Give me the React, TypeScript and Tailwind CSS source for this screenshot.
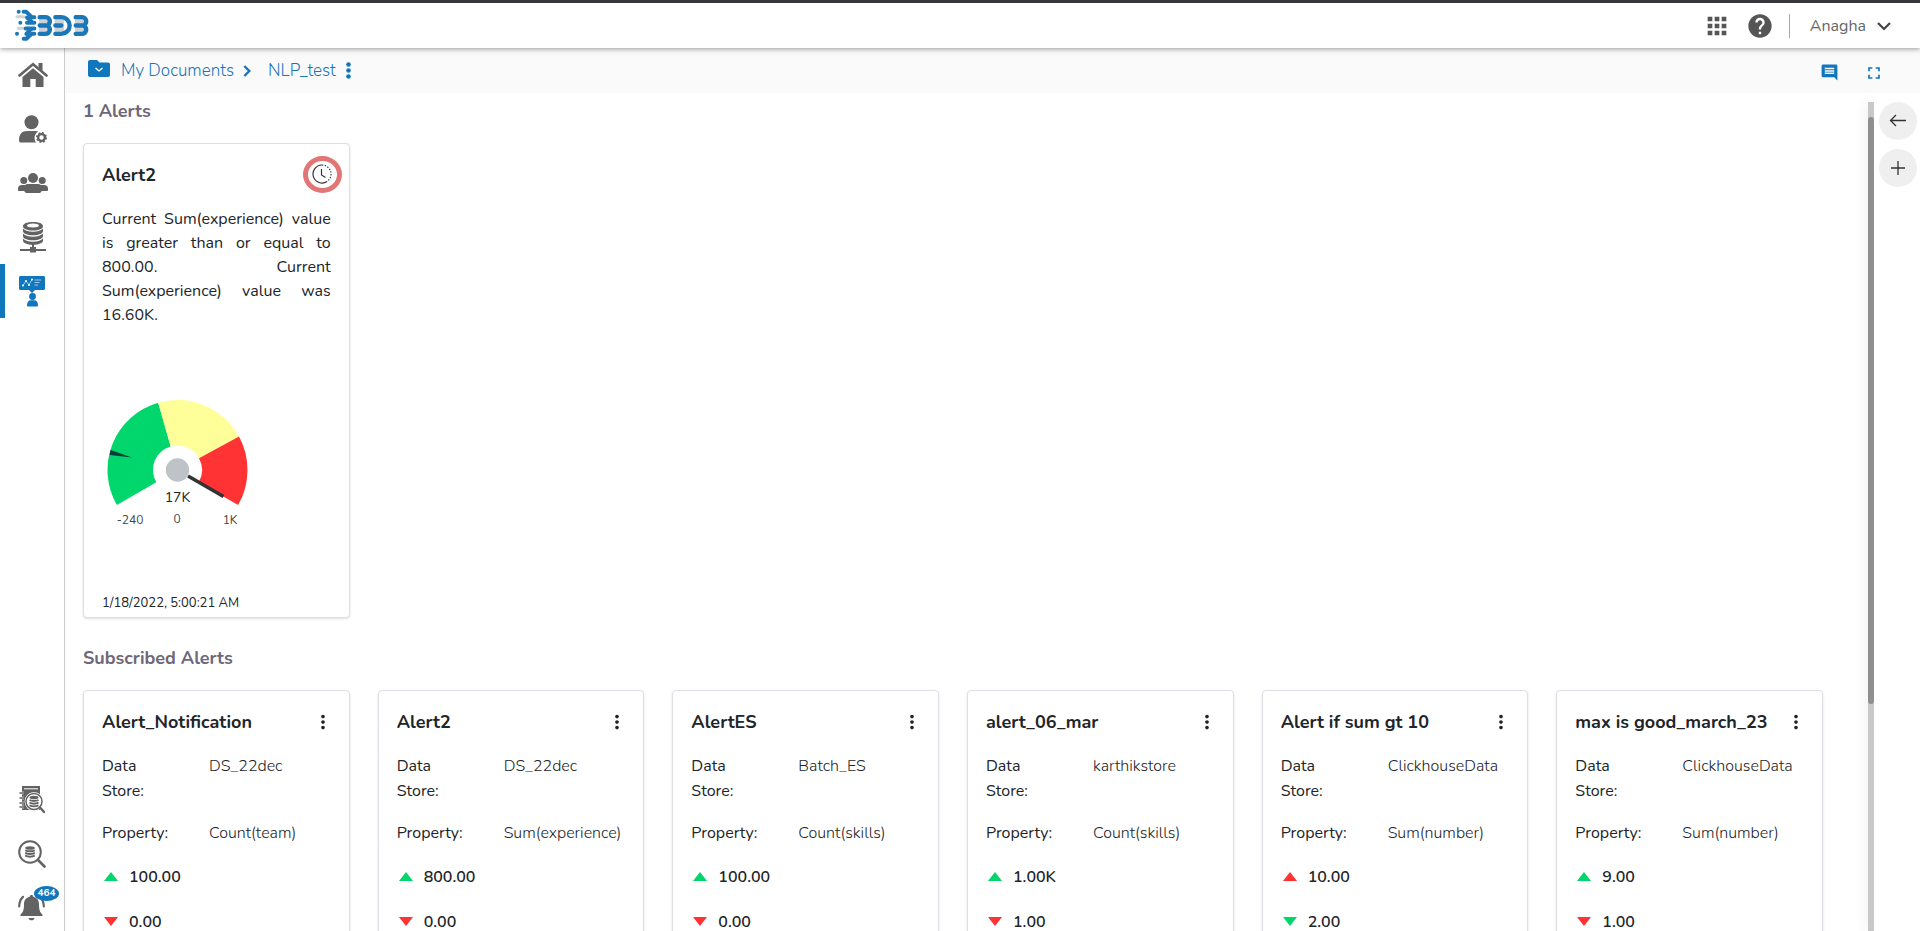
import React from 'react';
import { MdApps, MdHelp, MdComment, MdFullscreen, MdMoreVert } from 'react-icons/md';

interface SubscribedAlert {
  title: string;
  store: string;
  property: string;
  upper: string;
  lower: string;
  // when true, going above the upper limit is bad
  inverted?: boolean;
}

const alerts: SubscribedAlert[] = [
  { title: 'Alert_Notification', store: 'DS_22dec', property: 'Count(team)', upper: '100.00', lower: '0.00' },
  { title: 'Alert2', store: 'DS_22dec', property: 'Sum(experience)', upper: '800.00', lower: '0.00' },
  { title: 'AlertES', store: 'Batch_ES', property: 'Count(skills)', upper: '100.00', lower: '0.00' },
  { title: 'alert_06_mar', store: 'karthikstore', property: 'Count(skills)', upper: '1.00K', lower: '1.00' },
  { title: 'Alert if sum gt 10', store: 'ClickhouseData', property: 'Sum(number)', upper: '10.00', lower: '2.00', inverted: true },
  { title: 'max is good_march_23', store: 'ClickhouseData', property: 'Sum(number)', upper: '9.00', lower: '1.00' },
];

const Logo = () => (
  <svg width="74" height="33" viewBox="0 0 222 98" fill="none" role="img" aria-label="BDB">
    {/* grey backing */}
    <g stroke="#ccd2d8" strokeWidth="9" strokeLinecap="round">
      <path d="M6 23h22M10 57h18" />
      <path d="M72 36h28M119 36h28M180 36h28M72 62h28M119 62h28M180 62h28" strokeWidth="26" strokeLinecap="butt" />
    </g>
    <g stroke="#1b78b8" strokeWidth="12" strokeLinecap="round" strokeLinejoin="round">
      <path d="M26 8h8l16 16h8M36 41h22M32 58h26M26 89h8l16-15h8" />
      <path d="M36 25l14 13M34 74l14-14" />
    </g>
    <g stroke="#1b78b8" strokeWidth="13" strokeLinecap="round">
      <path d="M74 24h18a12.500 12.500 0 0 1 10 20M74 49h23M102 54a12.500 12.500 0 0 1-10 20h-18" />
      <path d="M121 24h18a25 25 0 0 1 0 50h-18M121 49h18" />
      <path d="M182 24h19a12.500 12.500 0 0 1 10 20M182 49h24M211 54a12.500 12.500 0 0 1-10 20h-19" />
    </g>
    <g fill="#1b78b8">
      <circle cx="11" cy="8" r="6" />
      <circle cx="16" cy="41" r="6" />
      <circle cx="6" cy="74" r="6" />
    </g>
  </svg>
);

const HomeIcon = () => (
  <svg width="30" height="26" viewBox="0 0 30 26" fill="currentColor">
    <path d="M20.500 1h4v8l-4-3.500z" />
    <path d="M1.500 13.500L15 2.300l13.500 11.200" fill="none" stroke="currentColor" strokeWidth="2.600" strokeLinecap="round" />
    <path d="M15 6.200L4.500 15v10h7.800v-8h5.400v8h7.800V15z" />
  </svg>
);

const UserGearIcon = () => (
  <svg width="28" height="28" viewBox="0 0 28 28" fill="currentColor">
    <circle cx="12.500" cy="7.200" r="7" />
    <path d="M0 25.500C0 19 3 16 8 16h8.500c1.200 0 2 .2 2.800.6-2.500 1.500-4 4-3.700 7 .1 1.500.6 3 1.600 4H2c-1.300 0-2-.8-2-2.100z" />
    <circle cx="22.500" cy="22.500" r="3.400" fill="none" stroke="currentColor" strokeWidth="2.400" />
    <circle cx="22.500" cy="22.500" r="4.700" fill="none" stroke="currentColor" strokeWidth="1.600" strokeDasharray="1.900 1.790" />
  </svg>
);

const UsersIcon = () => (
  <svg width="30" height="20" viewBox="0 0 30 20" fill="currentColor">
    <circle cx="15" cy="5" r="5" />
    <circle cx="5.800" cy="7.500" r="3.500" />
    <circle cx="24.200" cy="7.500" r="3.500" />
    <path d="M0 17v-1.500C0 13 1.800 12 4 12h3.500C6.500 13 6 14 6 15.500V18H1c-.6 0-1-.4-1-1zM30 17v-1.500c0-2.500-1.800-3.500-4-3.500h-3.500c1 1 1.500 2 1.500 3.500V18h5c.6 0 1-.4 1-1z" />
    <path d="M5.500 18v-2.500c0-3 2-4.500 4.500-4.500h10c2.500 0 4.500 1.500 4.500 4.500V18c-1.500 0-1.500 2-3 2h-13c-1.500 0-1.500-2-3-2z" />
  </svg>
);

const DatabaseIcon = () => (
  <svg width="26" height="31" viewBox="0 0 26 31" fill="currentColor">
    <path fillRule="evenodd" d="M13 0c6 0 10 1.600 10 4.200S19 8.500 13 8.500 3 6.800 3 4.200 7 0 13 0zm0 1.500c-4 0-6 1-6 2.100s2 2 6 2 6-.9 6-2-2-2.100-6-2.100z" />
    <path d="M3 6.500c1.500 2 5 3.200 10 3.200s8.500-1.200 10-3.200v2.800c0 2.300-4 4-10 4s-10-1.700-10-4zM3 11.500c1.500 2 5 3.200 10 3.200s8.500-1.200 10-3.200v2.800c0 2.300-4 4-10 4s-10-1.700-10-4zM3 16.500c1.500 2 5 3.200 10 3.200s8.500-1.200 10-3.200v2.300c0 2.300-4 4-10 4s-10-1.700-10-4z" />
    <path d="M12 22h2v3h2v2h10v2H16v1.500h-6V29H0v-2h10v-2h2z" />
  </svg>
);

const PresenterIcon = () => (
  <svg width="26" height="31" viewBox="0 0 26 31" fill="currentColor">
    <path d="M1.500 0h23c.8 0 1.500.7 1.500 1.500v11c0 .8-.7 1.500-1.500 1.500H16l-3 3-3-3H1.500C.7 14 0 13.300 0 12.500v-11C0 .7.700 0 1.500 0z" />
    <path d="M4 9.500l3-4.500 3 4 3-5.500M15.500 4h6.500M15.500 6.500h5M15.500 9h3.500" fill="none" stroke="#fff" strokeWidth=".6" />
    <g fill="#fff">
      <circle cx="4" cy="9.500" r="1" />
      <circle cx="7" cy="5" r="1" />
      <circle cx="10" cy="9" r="1" />
      <circle cx="13" cy="3.500" r="1" />
    </g>
    <circle cx="13.500" cy="20.500" r="3.400" />
    <path d="M8 29.500c0-3.500 1.500-5.300 4-5.300h3c2.500 0 4 1.800 4 5.300 0 .6-.4 1-1 1H9c-.6 0-1-.4-1-1z" />
  </svg>
);

const CatalogIcon = () => (
  <svg width="26" height="28" viewBox="0 0 26 28" fill="currentColor">
    <path d="M3 0h18v24H3z" />
    <path d="M5 2.800h14" stroke="#fff" strokeWidth="1" />
    <path d="M1 7h4M1 12h4M1 17h4M1 21h4" stroke="#fff" strokeWidth="2.600" />
    <path d="M1 7h4M1 12h4M1 17h4M1 21h4" stroke="currentColor" strokeWidth="1.500" strokeLinecap="round" />
    <circle cx="15" cy="15.500" r="9.400" fill="#fff" />
    <circle cx="15" cy="15.500" r="8" fill="#fff" stroke="currentColor" strokeWidth="1.500" />
    <path d="M21 21.500l4 4.500" stroke="currentColor" strokeWidth="2.400" strokeLinecap="round" />
    <ellipse cx="15" cy="11.500" rx="4.500" ry="1.800" />
    <path d="M10.500 14q4.500 2 9 0M10.500 16.700q4.500 2 9 0M10.500 19.400q4.500 2 9 0" fill="none" stroke="currentColor" strokeWidth="1.900" />
  </svg>
);

const DataSearchIcon = () => (
  <svg width="28" height="28" viewBox="0 0 28 28" fill="currentColor">
    <circle cx="12" cy="12" r="10.800" fill="none" stroke="currentColor" strokeWidth="2" />
    <path d="M20 20l6.500 6.500" stroke="currentColor" strokeWidth="2.600" strokeLinecap="round" />
    <ellipse cx="12" cy="8" rx="4.800" ry="1.800" />
    <path d="M7.200 10.300q4.800 2 9.600 0M7.200 13q4.800 2 9.600 0M7.200 15.700q4.800 2 9.600 0" fill="none" stroke="currentColor" strokeWidth="1.900" />
  </svg>
);

const BellIcon = () => (
  <svg width="28" height="26" viewBox="0 0 28 26" fill="currentColor">
    <path d="M13.500 0c1 0 1.800.7 1.800 1.700 3.700.8 5.700 3.500 5.700 7.300 0 6 1 8.500 3.500 10.500V21h-22v-1.500C5 17.500 6 15 6 9c0-3.800 2-6.500 5.700-7.300C11.700.7 12.500 0 13.500 0zM10.500 23h6c-.3 1.500-1.500 2.300-3 2.300s-2.700-.8-3-2.300z" />
    <path d="M1.200 11.500C1.200 7.500 2.500 4 5 1.800M25.800 11.500c0-4-1.300-7.500-3.800-9.700" fill="none" stroke="currentColor" strokeWidth="2.200" strokeLinecap="round" />
  </svg>
);

const mainNav = [
  { label: 'Home', icon: <HomeIcon /> },
  { label: 'User settings', icon: <UserGearIcon /> },
  { label: 'Groups', icon: <UsersIcon /> },
  { label: 'Data center', icon: <DatabaseIcon /> },
  { label: 'Designer', icon: <PresenterIcon />, active: true },
];

const Gauge = () => (
  <svg width="160" height="140" viewBox="0 0 160 140" className="block">
    {/* bands, angles run from -120 to 120 degrees around (75.500, 75) */}
    <path d="M14.900 110A70 70 0 0 1 56.200 7.700L68.700 51.400A24.500 24.500 0 0 0 54.300 87.300Z" fill="#00d66b" />
    <path d="M56.200 7.700A70 70 0 0 1 137 41.600L97 63.300A24.500 24.500 0 0 0 68.700 51.400Z" fill="#ffff99" />
    <path d="M137 41.600A70 70 0 0 1 136.100 110L96.700 87.300A24.500 24.500 0 0 0 97 63.300Z" fill="#ff3333" />
    <path d="M8.500 55L7.600 60L30 62.500Z" fill="#0d3b3b" />
    <path d="M86 81L121.500 101.500" stroke="#333" strokeWidth="3.600" />
    <circle cx="75.500" cy="75" r="11.700" fill="#bdc3c7" />
    <text x="75.500" y="107" textAnchor="middle" fontSize="14" fill="#222">17K</text>
    <g fontSize="12" fill="#444" textAnchor="middle">
      <text x="28" y="129">-240</text>
      <text x="75" y="128">0</text>
      <text x="128" y="129">1K</text>
    </g>
  </svg>
);

const Limit: React.FC<{ up?: boolean; good: boolean; value: string }> = ({ up, good, value }) => (
  <div className="flex h-[25px] items-center gap-[11px] pl-[2px] text-base font-semibold">
    <svg width="14" height="9" viewBox="0 0 14 9" className={good ? 'text-[#00d66b]' : 'text-[#ff3333]'}>
      <path d={up ? 'M7 0L14 9H0z' : 'M0 0H14L7 9z'} fill="currentColor" />
    </svg>
    {value}
  </div>
);

const AlertCard: React.FC<{ alert: SubscribedAlert }> = ({ alert }) => (
  <article className="h-[300px] rounded border border-[#dee0e6] bg-white pt-[19px] pr-[15px] pl-[18px] shadow-sm">
    <div className="flex h-6 items-center justify-between">
      <h3 className="text-lg leading-6 font-bold whitespace-nowrap">{alert.title}</h3>
      <button aria-label="Options">
        <MdMoreVert size={22} />
      </button>
    </div>
    <dl className="mt-5 grid grid-cols-[64px_1fr] gap-x-[43px] gap-y-[17px] text-base leading-[25px]">
      <dt>Data Store:</dt>
      <dd className="font-light">{alert.store}</dd>
      <dt className="whitespace-nowrap">Property:</dt>
      <dd className="font-light">{alert.property}</dd>
    </dl>
    <div className="mt-[18px] flex flex-col gap-5">
      <Limit up good={!alert.inverted} value={alert.upper} />
      <Limit good={!!alert.inverted} value={alert.lower} />
    </div>
  </article>
);

const App = () => {
  return (
    <div className="flex h-screen flex-col overflow-hidden bg-white font-['Nunito','Lato',sans-serif] text-[#212529]">
      {/* Top bar */}
      <header className="relative z-10 flex h-12 shrink-0 items-center justify-between border-t-3 border-[#38383d] bg-white pr-[29px] pl-[15px] shadow-[0_1px_5px_rgba(0,0,0,0.4)]">
        <Logo />
        <div className="flex items-center text-[#555]">
          <button aria-label="Applications">
            <MdApps size={28} />
          </button>
          <button aria-label="Help" className="ml-[15px]">
            <MdHelp size={28} />
          </button>
          <div className="ml-[15px] h-6 w-px bg-[#aaa]" />
          <button className="ml-5 flex items-center gap-[11px] pt-px text-base font-normal text-[#666]">
            Anagha
            <svg width="14" height="9" viewBox="0 0 14 9" fill="none" stroke="#444" strokeWidth="2.200">
              <path d="M1 1l6 6 6-6" />
            </svg>
          </button>
        </div>
      </header>

      <div className="flex min-h-0 flex-1">
        {/* Sidebar */}
        <nav className="flex w-[65px] shrink-0 flex-col justify-between border-r border-[#ccc] text-[#636363]">
          <div>
            {mainNav.map((item) => (
              <a
                key={item.label}
                href="#"
                aria-label={item.label}
                className={
                  item.active
                    ? 'flex h-[54px] items-center justify-center border-l-5 border-[#1177bd] pr-[5px] text-[#1177bd]'
                    : 'flex h-[54px] items-center justify-center pl-[2px]'
                }
              >
                {item.icon}
              </a>
            ))}
          </div>
          <div>
            <a href="#" aria-label="Catalog" className="flex h-[54px] items-center justify-center pt-2">
              <CatalogIcon />
            </a>
            <a href="#" aria-label="Data search" className="flex h-[54px] items-center justify-center pt-2">
              <DataSearchIcon />
            </a>
            <a href="#" aria-label="Notifications" className="relative flex h-[54px] items-center justify-center pt-2">
              <BellIcon />
              <span className="absolute top-[9px] right-[5px] flex h-[15px] w-[25px] items-center justify-center rounded-[50%] bg-[#1177bd] text-[10px] font-bold text-white">
                464
              </span>
            </a>
          </div>
        </nav>

        <main className="flex min-w-0 flex-1 flex-col">
          {/* Breadcrumb */}
          <div className="flex h-[45px] shrink-0 items-center justify-between bg-[#fafafa] pr-[36px] pl-[23px] text-[#1a75b8]">
            <div className="flex items-center text-[17px] leading-6 font-light">
              <svg width="22" height="17" viewBox="0 0 22 17" className="mr-[11px] mb-1">
                <path d="M2 0h7l2.500 2.500H20c1.100 0 2 .9 2 2V15c0 1.100-.9 2-2 2H2c-1.100 0-2-.9-2-2V2C0 .900.900 0 2 0z" fill="#1177bd" />
                <path d="M7.500 8l3.500 3 3.500-3" fill="none" stroke="#fff" strokeWidth="1.300" />
              </svg>
              <a href="#">My Documents</a>
              <svg width="8" height="12" viewBox="0 0 8 12" fill="none" stroke="currentColor" strokeWidth="2.400" className="mr-[17px] ml-[9px]">
                <path d="M1.300 1L6.300 6l-5 5" />
              </svg>
              <a href="#">NLP_test</a>
              <button aria-label="Document options" className="ml-[10px]">
                <svg width="5" height="17" viewBox="0 0 5 17" fill="#1177bd">
                  <circle cx="2.500" cy="2.500" r="2.300" />
                  <circle cx="2.500" cy="8.500" r="2.300" />
                  <circle cx="2.500" cy="14.500" r="2.300" />
                </svg>
              </button>
            </div>
            <div className="flex items-center gap-[25px] pt-1 text-[#1177bd]">
              <button aria-label="Comments">
                <MdComment size={19} />
              </button>
              <button aria-label="Full screen">
                <MdFullscreen size={20} />
              </button>
            </div>
          </div>

          <div className="flex min-h-0 flex-1">
            <div className="min-w-0 flex-1 overflow-hidden pt-[6px] pr-[45px] pl-[18px]">
              <h2 className="text-lg leading-6 font-bold text-[#6e6679]">1 Alerts</h2>

              <div className="mt-5 grid grid-cols-6 gap-7">
                <article className="flex h-[475px] flex-col rounded border border-[#dee0e6] bg-white pt-[11px] shadow-sm">
                  <div className="flex h-[38px] items-center justify-between pr-[7px] pl-[18px]">
                    <h3 className="pt-[2px] text-lg font-bold">Alert2</h3>
                    <button
                      aria-label="Schedule"
                      className="flex h-[37px] w-[39px] items-center justify-center rounded-[50%] border-5 border-[#e27676]"
                    >
                      <svg width="20" height="20" viewBox="0 0 20 20" fill="none" stroke="#333" strokeWidth="1.200">
                        <path d="M10 1a9 9 0 1 0 5 16.500" />
                        <path d="M10 1a9 9 0 0 1 5 16.500" strokeDasharray="1.300 1.500" />
                        <path d="M9.500 5v6l4 2.500" />
                      </svg>
                    </button>
                  </div>
                  <p className="mt-[14px] px-[18px] text-justify text-base leading-6">
                    Current Sum(experience) value is greater than or equal to 800.00. Current Sum(experience) value was 16.60K.
                  </p>
                  <div className="mt-[68px] pl-[18px]">
                    <Gauge />
                  </div>
                  <div className="mt-auto px-[18px] pb-1 text-[13px] leading-5">1/18/2022, 5:00:21 AM</div>
                </article>
              </div>

              <h2 className="mt-7 text-lg leading-6 font-bold text-[#6e6679]">Subscribed Alerts</h2>

              <div className="mt-5 grid grid-cols-6 gap-7">
                {alerts.map((alert) => (
                  <AlertCard key={alert.title} alert={alert} />
                ))}
              </div>
            </div>

            {/* Scroll track */}
            <div className="mt-[9px] w-[6px] shrink-0 bg-[#c8c8c8] pt-[15px] shadow-[-2px_0_12px_rgba(0,0,0,0.08)]">
              <div className="h-[587px] rounded-sm bg-[#8f8f8f]" />
            </div>

            {/* Right rail */}
            <aside className="flex w-[46px] shrink-0 flex-col items-center gap-[9px] bg-white pt-[9px] pl-[2px]">
              <button aria-label="Open panel" className="flex size-[38px] items-center justify-center rounded-full bg-[#efefef]">
                <svg width="18" height="14" viewBox="0 0 18 14" fill="none" stroke="#333" strokeWidth="1.300">
                  <path d="M17 6.500H2M7 1L1.500 6.500 7 12" />
                </svg>
              </button>
              <button aria-label="Add" className="flex size-[38px] items-center justify-center rounded-full bg-[#efefef]">
                <svg width="14" height="14" viewBox="0 0 14 14" stroke="#333" strokeWidth="1.300">
                  <path d="M7 0v14M0 7h14" />
                </svg>
              </button>
            </aside>
          </div>
        </main>
      </div>
    </div>
  );
};

export default App;
